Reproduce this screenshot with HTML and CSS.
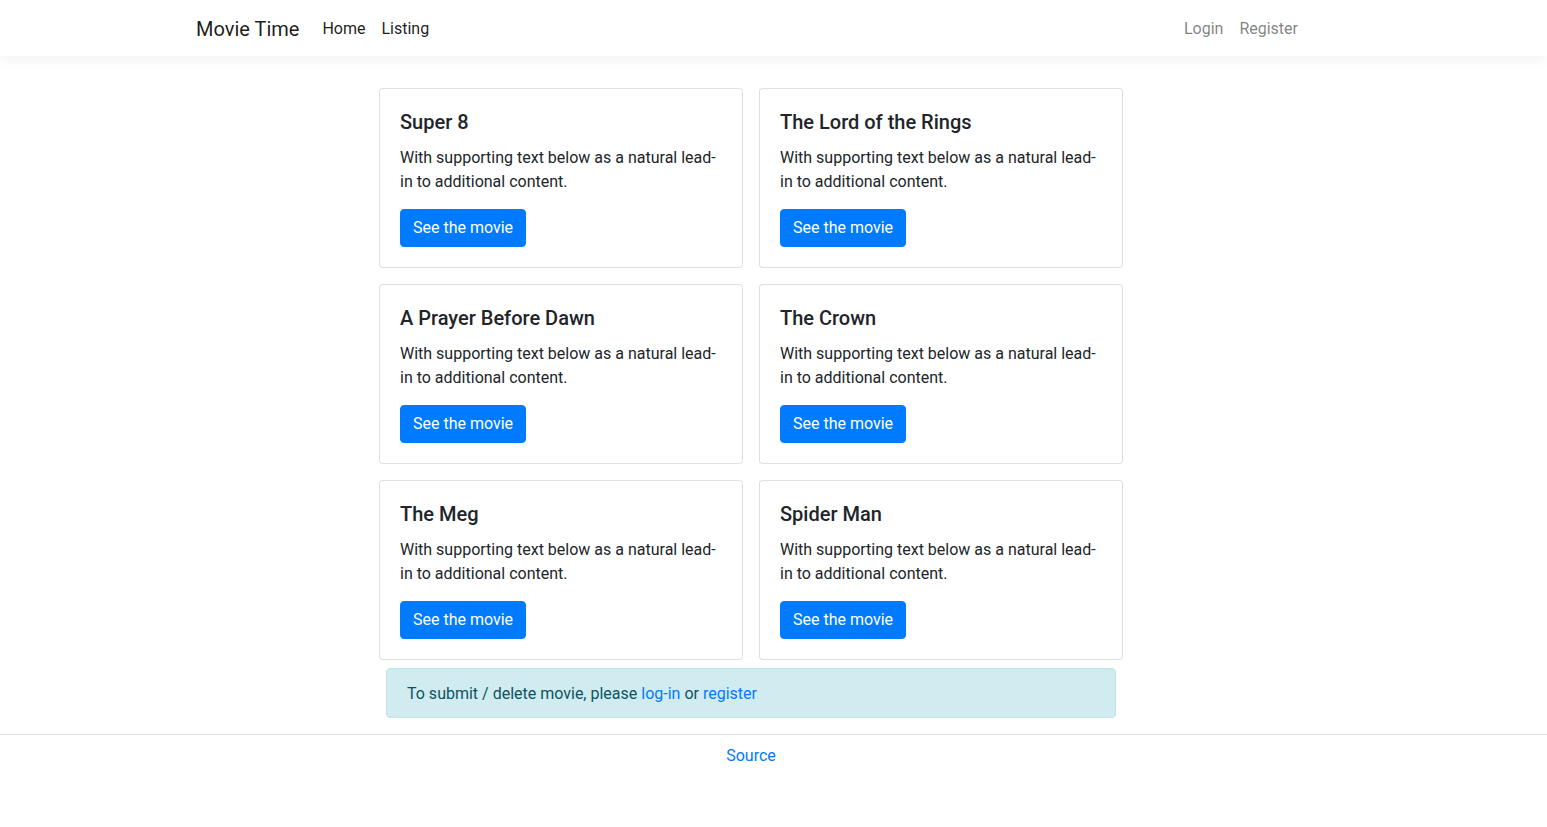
FILE: index.html
```html
<!DOCTYPE html>
<html>
<head>
<meta charset="utf-8">
<link rel="stylesheet" href="styles.css">
</head>
<body>
<nav class="navbar">
  <div class="nav-inner">
    <a class="brand" href="#">Movie Time</a>
    <ul class="nav-left">
      <li><a class="nav-link dark" href="#">Home</a></li>
      <li><a class="nav-link dark" href="#">Listing</a></li>
    </ul>
    <ul class="nav-right">
      <li><a class="nav-link muted" href="#">Login</a></li>
      <li><a class="nav-link muted" href="#">Register</a></li>
    </ul>
  </div>
</nav>
<main class="main">
  <div class="grid">
    <div class="card"><h5 class="card-title">Super 8</h5><p class="card-text">With supporting text below as a natural lead-in to additional content.</p><a class="btn" href="#">See the movie</a></div>
    <div class="card"><h5 class="card-title">The Lord of the Rings</h5><p class="card-text">With supporting text below as a natural lead-in to additional content.</p><a class="btn" href="#">See the movie</a></div>
    <div class="card"><h5 class="card-title">A Prayer Before Dawn</h5><p class="card-text">With supporting text below as a natural lead-in to additional content.</p><a class="btn" href="#">See the movie</a></div>
    <div class="card"><h5 class="card-title">The Crown</h5><p class="card-text">With supporting text below as a natural lead-in to additional content.</p><a class="btn" href="#">See the movie</a></div>
    <div class="card"><h5 class="card-title">The Meg</h5><p class="card-text">With supporting text below as a natural lead-in to additional content.</p><a class="btn" href="#">See the movie</a></div>
    <div class="card"><h5 class="card-title">Spider Man</h5><p class="card-text">With supporting text below as a natural lead-in to additional content.</p><a class="btn" href="#">See the movie</a></div>
  </div>
  <div class="alert">To submit / delete movie, please <a href="#">log-in</a> or <a href="#">register</a></div>
</main>
<footer class="footer">
  <a href="#">Source</a>
</footer>
</body>
</html>
```
FILE: styles.css
```css
* { box-sizing: border-box; }
html, body { margin: 0; padding: 0; }
body {
  font-family: Roboto, "Open Sans", "Liberation Sans", sans-serif;
  font-size: 16px;
  line-height: 1.5;
  color: #212529;
  background: #fff;
}
a { text-decoration: none; color: #007bff; }
ul { list-style: none; margin: 0; padding: 0; }

.navbar {
  height: 56px;
  background: #fff;
  box-shadow: 0 4px 12px rgba(0,0,0,0.05);
}
.nav-inner {
  width: 1110px;
  margin-left: 196px;
  height: 56px;
  padding-top: 2px;
  display: flex;
  align-items: center;
}
.brand {
  font-size: 20px;
  line-height: 30px;
  color: rgba(0,0,0,0.9);
  margin-right: 15px;
}
.nav-left, .nav-right { display: flex; }
.nav-right { margin-left: auto; }
.nav-link {
  display: block;
  padding: 8px 8px;
  line-height: 24px;
}
.dark { color: rgba(0,0,0,0.9); }
.muted { color: rgba(0,0,0,0.5); }

.main {
  width: 744px;
  margin: 32px 0 0 379px;
}
.grid {
  display: grid;
  grid-template-columns: 364px 364px;
  column-gap: 16px;
  row-gap: 16px;
}
.card {
  border: 1px solid rgba(0,0,0,0.125);
  border-radius: 4px;
  padding: 21px 20px 20px;
  background: #fff;
}
.card-title {
  margin: 0 0 12px;
  font-size: 20px;
  font-weight: 500;
  line-height: 1.2;
}
.card-text {
  margin: 0 0 15px;
}
.btn {
  display: inline-block;
  background: #007bff;
  color: #fff;
  border: 1px solid #007bff;
  border-radius: 4px;
  padding: 6px 12px;
  line-height: 24px;
}
.alert {
  margin: 8px 7px 16px;
  padding: 13px 20px 11px;
  background: #d1ecf1;
  border: 1px solid #bee5eb;
  border-radius: 4px;
  color: #0c5460;
}
.footer {
  border-top: 1px solid #dee2e6;
  padding: 9px 0 0;
  height: 93px;
}
.footer a {
  display: block;
  width: 1502px;
  text-align: center;
}
```
